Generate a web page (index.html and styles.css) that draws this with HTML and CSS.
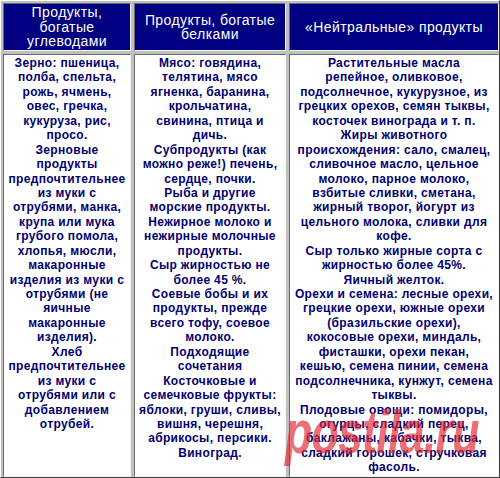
FILE: index.html
```html
<!DOCTYPE html>
<html lang="ru">
<head>
<meta charset="utf-8">
<link rel="stylesheet" href="styles.css">
</head>
<body>
<div class="sheet">
  <div class="grid">
    <div class="cell head">Продукты,<br>богатые<br>углеводами</div>
    <div class="cell head">Продукты, богатые<br>белками</div>
    <div class="cell head">«Нейтральные» продукты</div>
    <div class="cell body">Зерно: пшеница,<br>полба, спельта,<br>рожь, ячмень,<br>овес, гречка,<br>кукуруза, рис,<br>просо.<br>Зерновые<br>продукты<br>предпочтительнее<br>из муки с<br>отрубями, манка,<br>крупа или мука<br>грубого помола,<br>хлопья, мюсли,<br>макаронные<br>изделия из муки с<br>отрубями (не<br>яичные<br>макаронные<br>изделия).<br>Хлеб<br>предпочтительнее<br>из муки с<br>отрубями или с<br>добавлением<br>отрубей.</div>
    <div class="cell body">Мясо: говядина,<br>телятина, мясо<br>ягненка, баранина,<br>крольчатина,<br>свинина, птица и<br>дичь.<br>Субпродукты (как<br>можно реже!) печень,<br>сердце, почки.<br>Рыба и другие<br>морские продукты.<br>Нежирное молоко и<br>нежирные молочные<br>продукты.<br>Сыр жирностью не<br>более 45 %.<br>Соевые бобы и их<br>продукты, прежде<br>всего тофу, соевое<br>молоко.<br>Подходящие<br>сочетания<br>Косточковые и<br>семечковые фрукты:<br>яблоки, груши, сливы,<br>вишня, черешня,<br>абрикосы, персики.<br>Виноград.</div>
    <div class="cell body">Растительные масла<br>репейное, оливковое,<br>подсолнечное, кукурузное, из<br>грецких орехов, семян тыквы,<br>косточек винограда и т. п.<br>Жиры животного<br>происхождения: сало, смалец,<br>сливочное масло, цельное<br>молоко, парное молоко,<br>взбитые сливки, сметана,<br>жирный творог, йогурт из<br>цельного молока, сливки для<br>кофе.<br>Сыр только жирные сорта с<br>жирностью более 45%.<br>Яичный желток.<br>Орехи и семена: лесные орехи,<br>грецкие орехи, южные орехи<br>(бразильские орехи),<br>кокосовые орехи, миндаль,<br>фисташки, орехи пекан,<br>кешью, семена пинии, семена<br>подсолнечника, кунжут, семена<br>тыквы.<br>Плодовые овощи: помидоры,<br>огурцы, сладкий перец,<br>баклажаны, кабачки, тыква,<br>сладкий горошек, стручковая<br>фасоль.</div>
  </div>
  <div class="watermark" aria-hidden="true">postila.ru</div>
</div>
</body>
</html>
```

FILE: styles.css
```css
html, body {
  margin: 0;
  padding: 0;
  background: #c0c0c0;
}
.sheet {
  position: relative;
  width: 500px;
  height: 478px;
  overflow: hidden;
  font-family: "Liberation Sans", Arial, sans-serif;
}
.grid {
  box-sizing: border-box;
  width: 500px;
  height: 478px;
  display: grid;
  grid-template-columns: 128px 152px 210px;
  grid-template-rows: 48px 423px;
  gap: 3px;
  padding: 2px;
  background: #c0c0c0;
  border-top: 1px solid #ffffff;
  border-left: 1px solid #ffffff;
  border-right: 1px solid #404040;
  border-bottom: 1px solid #404040;
}
.cell {
  box-sizing: border-box;
  border-top: 1px solid #6a6a6a;
  border-left: 1px solid #6a6a6a;
  border-right: 1px solid #f4f4f4;
  border-bottom: 1px solid #f4f4f4;
  text-align: center;
}
.head {
  background: #000080;
  color: #ffffff;
  font-size: 14px;
  line-height: 14.5px;
  letter-spacing: 0.4px;
  display: flex;
  align-items: center;
  justify-content: center;
}
.body {
  background: #ffffff;
  color: #000070;
  font-size: 12px;
  font-weight: bold;
  line-height: 14.44px;
  letter-spacing: 0.35px;
  padding-top: 1px;
  white-space: nowrap;
}
.watermark {
  position: absolute;
  left: 285px;
  top: 401px;
  font-size: 62px;
  font-weight: bold;
  font-style: italic;
  color: rgba(222, 38, 48, 0.66);
  transform: scaleX(0.72);
  transform-origin: left top;
  line-height: 62px;
  letter-spacing: -1px;
  pointer-events: none;
}
```
